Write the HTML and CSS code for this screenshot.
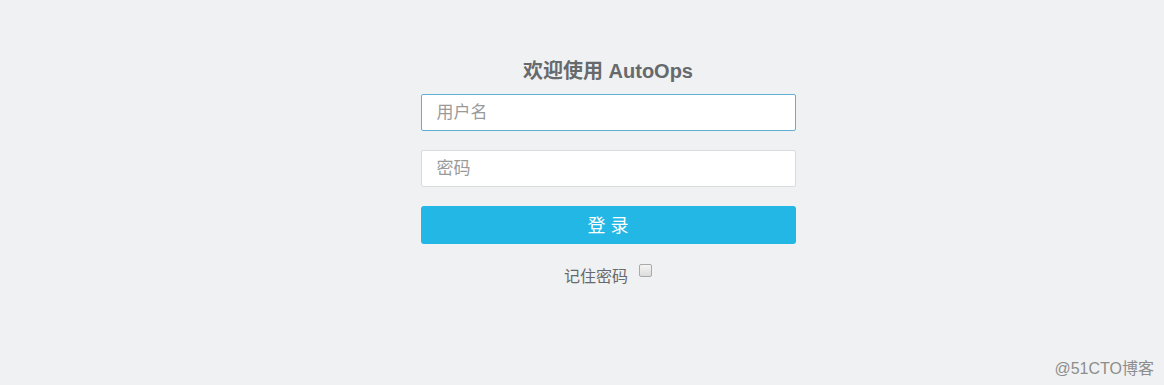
FILE: index.html
```html
<html>
  <head>
    <meta charset="utf-8" />
    <title>AutoOps</title>
    <link rel="stylesheet" href="styles.css">
  </head>
  <body>
    <div class="login-page">
      <div class="login-box">
        <h3 class="login-title">欢迎使用 AutoOps</h3>
        <form class="login-form">
          <input class="form-control user-input" type="text" placeholder="用户名" />
          <input class="form-control" type="password" placeholder="密码" />
          <button class="btn-login" type="button">登 录</button>
          <label class="remember">记住密码 <span class="check-box"></span></label>
        </form>
      </div>
    </div>
    <div class="watermark">@51CTO博客</div>
  </body>
</html>
```

FILE: styles.css
```css
body {
  margin: 0;
  background: #f0f1f2;
  font-family: "Liberation Sans", "Noto Sans CJK SC", sans-serif;
  color: #676a6c;
  height: 385px;
  overflow: hidden;
  position: relative;
}
.login-page {
  display: flex;
  justify-content: center;
  padding-left: 52px;
  padding-top: 57px;
}
.login-box {
  width: 375px;
}
.login-title {
  margin: 0 0 9px;
  text-align: center;
  font-size: 20px;
  font-weight: bold;
  line-height: 28px;
  color: #666a6c;
}
.login-form {
  display: flex;
  flex-direction: column;
}
.form-control {
  box-sizing: border-box;
  height: 37px;
  margin: 0 0 19px;
  padding: 0 15px;
  border: 1px solid #d9dcdd;
  border-radius: 2px;
  background: #fff;
  font-family: inherit;
  font-size: 17px;
  outline: none;
}
.form-control::placeholder {
  color: #9a9a9a;
}
.login-form .user-input {
  border: 1px solid #5fb0d4;
}
.btn-login {
  height: 38px;
  padding: 0 0 3px;
  border: none;
  border-radius: 3px;
  background: #23b7e5;
  color: #fff;
  font-family: inherit;
  font-size: 18px;
  cursor: pointer;
}
.remember {
  margin-top: 19px;
  display: flex;
  justify-content: center;
  align-items: center;
  gap: 11px;
  font-size: 16px;
  color: #676a6c;
}
.check-box {
  display: inline-block;
  width: 11px;
  height: 11px;
  margin-top: -9px;
  border: 1px solid #a9a9a9;
  border-radius: 2px;
  background: linear-gradient(#f4f4f4, #dcdcdc);
}
.watermark {
  position: absolute;
  right: 10px;
  bottom: 6px;
  font-size: 16px;
  color: #8d8d8d;
}
```
